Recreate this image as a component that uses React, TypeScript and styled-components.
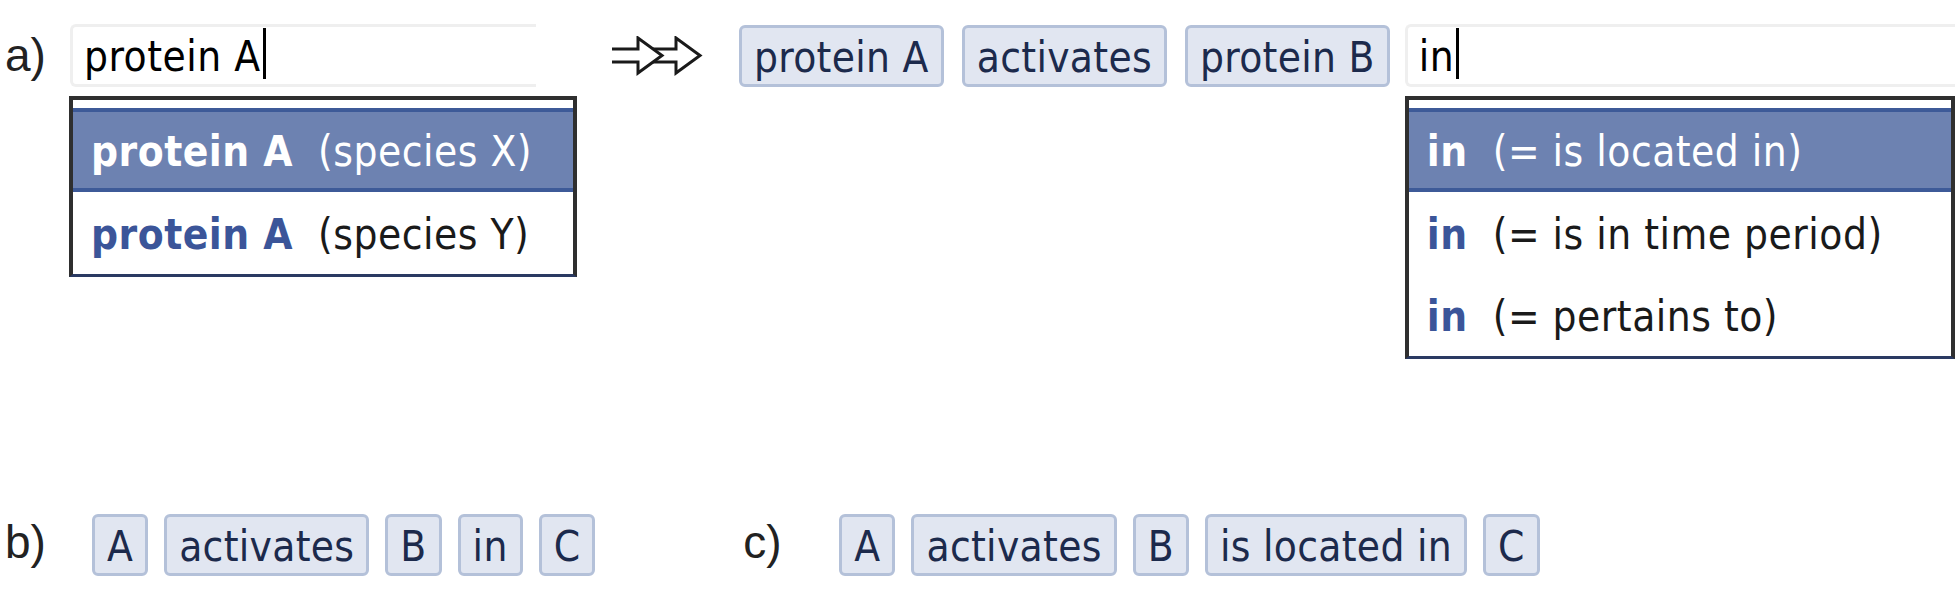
import React from "react";
import styled, { createGlobalStyle } from "styled-components";

const FONT = `"DejaVu Sans Condensed", "Open Sans", "DejaVu Sans", sans-serif`;

const Global = createGlobalStyle`
  html, body { margin: 0; padding: 0; background: #ffffff; }
  body {
    width: 1955px;
    height: 608px;
    overflow: hidden;
    font-family: ${FONT};
  }
`;

const Page = styled.div`
  display: flex;
  flex-direction: column;
  box-sizing: border-box;
  height: 608px;
  padding: 24px 0 0 5px;
`;

const TopRow = styled.div`
  display: flex;
  align-items: flex-start;
`;

const BottomRow = styled.div`
  display: flex;
  align-items: flex-start;
  margin-top: 155px;
`;

const Group = styled.div<{ $offset?: number }>`
  display: flex;
  align-items: flex-start;
  margin-left: ${(p) => p.$offset ?? 0}px;
`;

const Label = styled.div<{ $w: number; $lh: number }>`
  flex: none;
  width: ${(p) => p.$w}px;
  font-family: "Liberation Sans", Arial, sans-serif;
  font-size: 46px;
  line-height: ${(p) => p.$lh}px;
  color: #222222;
`;

const Combo = styled.div<{ $w?: number }>`
  display: flex;
  flex-direction: column;
  align-items: flex-start;
  ${(p) => (p.$w ? `width: ${p.$w}px; flex: none;` : `flex: 1; min-width: 0;`)}
`;

const Field = styled.div<{ $w?: number }>`
  box-sizing: border-box;
  height: 63px;
  width: ${(p) => (p.$w ? `${p.$w}px` : "100%")};
  border: 3px solid #efefef;
  border-right: none;
  border-radius: 6px 0 0 6px;
  padding: 1px 0 0 11px;
  font-size: 42px;
  line-height: 56px;
  letter-spacing: 0.5px;
  color: #000000;
  white-space: nowrap;
  overflow: hidden;
`;

const Caret = styled.span`
  display: inline-block;
  width: 3px;
  height: 51px;
  margin-left: 2px;
  background: #000000;
  vertical-align: -8px;
`;

const Menu = styled.div<{ $w?: number; $shift?: number }>`
  box-sizing: border-box;
  width: ${(p) => (p.$w ? `${p.$w}px` : "100%")};
  margin: 9px 0 0 ${(p) => p.$shift ?? 0}px;
  padding-top: 8px;
  background: #ffffff;
  border: 4px solid #2f2f2f;
  border-bottom: 3px solid #2a3a62;
`;

const Option = styled.div<{ $sel?: boolean }>`
  height: ${(p) => (p.$sel ? 72 : 78)}px;
  line-height: ${(p) => (p.$sel ? 72 : 78)}px;
  padding: 4px 0 0 18px;
  font-size: 42px;
  letter-spacing: 0.5px;
  white-space: nowrap;
  color: ${(p) => (p.$sel ? "#ffffff" : "#1a1a1a")};
  background: ${(p) => (p.$sel ? "#6d82b1" : "#ffffff")};
  border-top: ${(p) => (p.$sel ? "4px solid #3d5a98" : "none")};
  border-bottom: ${(p) => (p.$sel ? "4px solid #3d5a98" : "none")};
`;

const Key = styled.b<{ $sel?: boolean }>`
  font-weight: 700;
  color: ${(p) => (p.$sel ? "#ffffff" : "#3b5599")};
`;

const Gloss = styled.span`
  margin-left: 25px;
`;

const ArrowIcon = styled.svg`
  flex: none;
  margin: 12px 0 0 34px;
`;

const ChipList = styled.div<{ $gap: number; $offset?: number }>`
  display: flex;
  flex: none;
  gap: ${(p) => p.$gap}px;
  margin-left: ${(p) => p.$offset ?? 0}px;
  margin-top: ${(p) => (p.$offset !== undefined ? 1 : 0)}px;
`;

const Chip = styled.span`
  box-sizing: border-box;
  display: block;
  height: 62px;
  padding: 4px 12px 0;
  border: 3px solid #b4c1d9;
  border-radius: 6px;
  background: #e1e6f1;
  color: #1c2a4c;
  font-size: 42px;
  line-height: 52px;
  letter-spacing: 0.3px;
  white-space: nowrap;
`;

const RightCombo = styled(Combo)`
  margin-left: 15px;
`;

const DoubleArrow = () => (
  <ArrowIcon width="92" height="40" viewBox="0 0 92 40" fill="none">
    <path
      d="M1 13 H27 V2 L51 19.5 L27 37 V26 H1"
      stroke="#1a1a1a"
      strokeWidth="3"
      strokeLinejoin="miter"
    />
    <path
      d="M42 13 H65 V2 L89 19.5 L65 37 V26 H42"
      stroke="#1a1a1a"
      strokeWidth="3"
      strokeLinejoin="miter"
    />
  </ArrowIcon>
);

type Opt = { key: string; gloss: string };

const Dropdown = ({ options, w, shift }: { options: Opt[]; w?: number; shift?: number }) => (
  <Menu $w={w} $shift={shift}>
    {options.map((o, i) => (
      <Option key={i} $sel={i === 0}>
        <Key $sel={i === 0}>{o.key}</Key>
        <Gloss>{o.gloss}</Gloss>
      </Option>
    ))}
  </Menu>
);

const Chips = ({ items, gap, offset }: { items: string[]; gap: number; offset?: number }) => (
  <ChipList $gap={gap} $offset={offset}>
    {items.map((t, i) => (
      <Chip key={i}>{t}</Chip>
    ))}
  </ChipList>
);

export default function App() {
  return (
    <>
      <Global />
      <Page>
        <TopRow>
          <Label $w={65} $lh={63}>a)</Label>
          <Combo $w={507}>
            <Field $w={466}>
              protein A<Caret />
            </Field>
            <Dropdown
              w={508}
              shift={-1}
              options={[
                { key: "protein A", gloss: "(species X)" },
                { key: "protein A", gloss: "(species Y)" },
              ]}
            />
          </Combo>
          <DoubleArrow />
          <Chips items={["protein A", "activates", "protein B"]} gap={18} offset={36} />
          <RightCombo>
            <Field>
              in<Caret />
            </Field>
            <Dropdown
              options={[
                { key: "in", gloss: "(= is located in)" },
                { key: "in", gloss: "(= is in time period)" },
                { key: "in", gloss: "(= pertains to)" },
              ]}
            />
          </RightCombo>
        </TopRow>
        <BottomRow>
          <Group>
            <Label $w={87} $lh={56}>b)</Label>
            <Chips items={["A", "activates", "B", "in", "C"]} gap={16} />
          </Group>
          <Group $offset={148}>
            <Label $w={96} $lh={56}>c)</Label>
            <Chips items={["A", "activates", "B", "is located in", "C"]} gap={16} />
          </Group>
        </BottomRow>
      </Page>
    </>
  );
}
